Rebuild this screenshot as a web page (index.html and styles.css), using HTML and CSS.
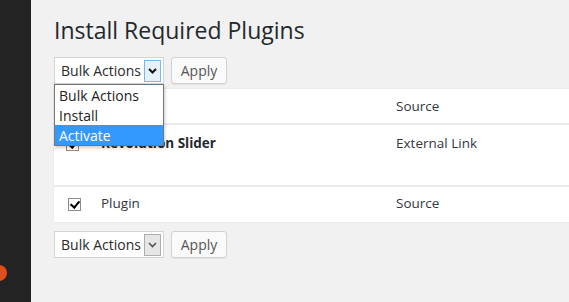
FILE: index.html
```html
<!DOCTYPE html>
<html lang="en">
<head>
    <meta charset="UTF-8">
    <title>Install Required Plugins</title>
    <link rel="stylesheet" href="styles.css">
</head>
<body>
    <div class="wrap">
        <aside class="sidebar">
            <span class="dot"></span>
        </aside>

        <main class="content">
            <h1>Install Required Plugins</h1>

            <!-- TOP BULK ACTIONS (open) -->
            <div class="tablenav top">
                <div class="select is-focused">
                    <span class="select-label">Bulk Actions</span>
                    <span class="select-arrow">
                        <svg width="9" height="6" viewBox="0 0 9 6"><path d="M1 1 L4.5 4.5 L8 1" fill="none" stroke="#111" stroke-width="2"/></svg>
                    </span>
                    <ul class="select-menu">
                        <li>Bulk Actions</li>
                        <li>Install</li>
                        <li class="is-active">Activate</li>
                    </ul>
                </div>
                <button type="button" class="apply">Apply</button>
            </div>

            <!-- PLUGIN TABLE -->
            <div class="plugins">
                <div class="row row-head">
                    <div class="cell cb"><span class="check"></span></div>
                    <div class="cell name">Plugin</div>
                    <div class="cell src">Source</div>
                </div>
                <div class="row row-item">
                    <div class="cell cb cb-item"><span class="check"></span></div>
                    <div class="cell name"><strong>Revolution Slider</strong></div>
                    <div class="cell src">External Link</div>
                </div>
                <div class="row row-foot">
                    <div class="cell cb"><span class="check"></span></div>
                    <div class="cell name">Plugin</div>
                    <div class="cell src">Source</div>
                </div>
            </div>

            <!-- BOTTOM BULK ACTIONS -->
            <div class="tablenav bottom">
                <div class="select">
                    <span class="select-label">Bulk Actions</span>
                    <span class="select-arrow">
                        <svg width="9" height="6" viewBox="0 0 9 6"><path d="M1 1 L4.5 4.5 L8 1" fill="none" stroke="#555" stroke-width="1.6"/></svg>
                    </span>
                </div>
                <button type="button" class="apply">Apply</button>
            </div>
        </main>
    </div>
</body>
</html>
```

FILE: styles.css
```css
* {
    box-sizing: border-box;
    margin: 0;
    padding: 0;
}

html, body {
    height: 100%;
    overflow: hidden;
}

body {
    font-family: 'Open Sans', 'Liberation Sans', sans-serif;
    background: #f1f1f1;
    color: #32373c;
}

.wrap {
    display: flex;
    height: 100%;
}

.sidebar {
    position: relative;
    flex: 0 0 31px;
    background: #232323;
    overflow: hidden;
}

.dot {
    position: absolute;
    left: -9px;
    top: 265px;
    width: 16px;
    height: 16px;
    border-radius: 50%;
    background: #dd4f1e;
}

.content {
    flex: 1;
    padding: 14px 0 0 23px;
    min-width: 0;
}

h1 {
    font-size: 23px;
    font-weight: 400;
    line-height: 32px;
    color: #23282d;
}

.tablenav {
    display: flex;
    align-items: center;
    gap: 7px;
}

.tablenav.top {
    margin-top: 11px;
}

.tablenav.bottom {
    margin-top: 9px;
}

.select {
    position: relative;
    width: 110px;
    height: 27px;
    background: #fff;
    border: 1px solid #d4d4d4;
    display: flex;
    align-items: center;
    font-size: 14px;
    color: #2a2a2a;
    white-space: nowrap;
}

.select-label {
    padding-left: 6px;
    flex: 1;
    line-height: 20px;
}

.select-arrow {
    width: 17px;
    height: 22px;
    margin-right: 2px;
    background: #e6e6e6;
    border: 1px solid #adadad;
    display: flex;
    align-items: center;
    justify-content: center;
}

.is-focused .select-arrow {
    background: #e5f1fb;
    border-color: #7eb4ea;
}

.select-menu {
    position: absolute;
    top: 26px;
    left: -1px;
    width: 110px;
    list-style: none;
    background: #fff;
    border: 1px solid #767676;
    box-shadow: 1px 2px 3px rgba(0, 0, 0, 0.2);
    z-index: 5;
}

.select-menu li {
    height: 20px;
    line-height: 21px;
    padding-left: 4px;
    color: #222;
}

.select-menu li.is-active {
    background: #3399ff;
    color: #fff;
}

.apply {
    width: 56px;
    height: 27px;
    font-family: inherit;
    font-size: 14px;
    color: #555;
    background: #fafafa;
    border: 1px solid #d2d2d2;
    border-radius: 3px;
    box-shadow: 0 1px 0 rgba(0, 0, 0, 0.05);
}

.plugins {
    margin-top: 5px;
    width: 620px;
    background: #ebebeb;
    box-shadow: 0 0 1px rgba(0, 0, 0, 0.12);
    display: flex;
    flex-direction: column;
    gap: 2px;
    font-size: 13.5px;
    color: #32373c;
}

.row {
    display: flex;
    background: #fff;
}

.row-head {
    height: 34px;
    align-items: center;
}

.row-item {
    height: 60px;
    align-items: flex-start;
}

.row-foot {
    height: 35px;
    align-items: center;
}

.row-foot .name,
.row-foot .src {
    padding-bottom: 3px;
}

.cell {
    line-height: 20px;
}

.cb {
    width: 47px;
    padding-left: 14px;
    display: flex;
}

.cb-item {
    padding-left: 12px;
    padding-top: 13px;
}

.name {
    width: 295px;
}

.row-item .name,
.row-item .src {
    padding-top: 8px;
}

.name strong {
    font-weight: 700;
    color: #23282d;
}

.check {
    width: 13px;
    height: 13px;
    border: 1px solid #8c8c8c;
    background: #fff;
    position: relative;
}

.check::after {
    content: "";
    position: absolute;
    left: 3px;
    top: 0px;
    width: 4px;
    height: 7px;
    border-right: 2px solid #000;
    border-bottom: 2px solid #000;
    transform: rotate(40deg);
}
```
